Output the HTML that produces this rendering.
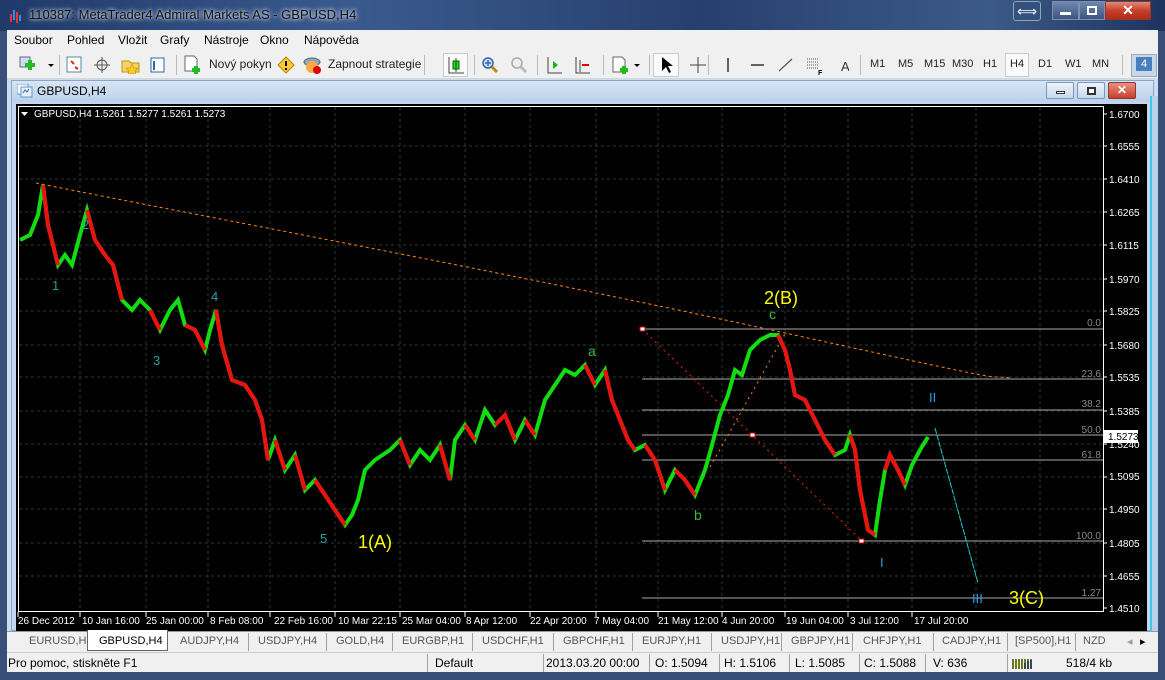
<!DOCTYPE html>
<html><head><meta charset="utf-8"><style>
*{margin:0;padding:0;box-sizing:border-box}
body{width:1165px;height:680px;overflow:hidden;background:#3a4f77;font-family:"Liberation Sans",sans-serif;font-size:12px;position:relative}
.abs{position:absolute}
#title{left:0;top:0;width:1165px;height:31px;background:linear-gradient(90deg,#1f3a68,#3a5a8e 30%,#26406e 60%,#3c5a86 85%,#1e3360);}
#title span{position:absolute;left:29px;top:7px;color:#111;font-size:13px;text-shadow:0 0 6px #cdd8e8,0 0 3px #e8eef6}
#menu{left:7px;top:30px;width:1151px;height:21px;background:#f0f0f0}
#menu span{position:absolute;top:3px;font-size:12px;color:#000}
#tb{left:7px;top:51px;width:1151px;height:28px;background:#f0f0f0;border-bottom:1px solid #d8d8d8}
#tb span{position:absolute;top:7px;font-size:11px;color:#222}
.sep{position:absolute;top:4px;width:1px;height:20px;background:#bbb}
#mdi{left:7px;top:79px;width:1151px;height:573px;background:#c9dcf0}
#child{left:11px;top:80px;width:1143px;height:551px;background:linear-gradient(#d8e6f4,#bcd2ea 20px,#c3d8ee 22px);border:1px solid #8aa6c6}
#chart{left:16px;top:104px;width:1131px;height:527px;background:#000}
#tabs{left:7px;top:631px;width:1151px;height:21px;background:#f0f0f0;border-top:1px solid #999}
#tabs span{position:absolute;top:3px;font-size:11px;color:#555}
#status{left:7px;top:652px;width:1151px;height:20px;background:#f0f0f0;border-top:1px solid #ccc}
#status span{position:absolute;top:3px;font-size:12px;color:#000}
.vs{position:absolute;top:1px;width:1px;height:18px;background:#a0a0a0}
</style></head><body>
<div id="title" class="abs"><svg class="abs" style="left:9px;top:8px" width="14" height="16"><rect x="1" y="6" width="2" height="8" fill="#e33"/><rect x="4" y="2" width="2" height="10" fill="#3a8ee0"/><rect x="7" y="4" width="2" height="11" fill="#e33"/><rect x="10" y="7" width="2" height="6" fill="#3a8ee0"/></svg><span>110387: MetaTrader4 Admiral Markets AS - GBPUSD,H4</span>
<div class="abs" style="left:1013px;top:1px;width:28px;height:20px;border:1px solid #8aa;border-radius:3px;background:#33507e;color:#fff;text-align:center;font-size:14px;line-height:18px">⟺</div>
<div class="abs" style="left:1052px;top:1px;width:27px;height:19px;border:1px solid #7b8fae;background:linear-gradient(#6f87ad,#3c5680);"><div style="margin:10px auto 0;width:11px;height:3px;background:#fff"></div></div>
<div class="abs" style="left:1079px;top:1px;width:26px;height:19px;border:1px solid #7b8fae;background:linear-gradient(#6f87ad,#3c5680);"><div style="margin:4px auto 0;width:10px;height:9px;border:2px solid #fff"></div></div>
<div class="abs" style="left:1105px;top:1px;width:46px;height:19px;border:1px solid #8a3a30;background:linear-gradient(#e08a7a,#c8402a 50%,#b02a18);color:#fff;font-weight:bold;text-align:center;font-size:14px;line-height:17px">✕</div>
</div>
<div id="menu" class="abs"><span style="left:7px">Soubor</span><span style="left:60px">Pohled</span><span style="left:111px">Vložit</span><span style="left:153px">Grafy</span><span style="left:197px">Nástroje</span><span style="left:253px">Okno</span><span style="left:297px">Nápověda</span></div>
<div id="tb" class="abs">
<svg class="abs" style="left:12px;top:5px" width="36" height="18"><rect x="1" y="1" width="10" height="10" fill="#cde" stroke="#668"/><path d="M6 9h10M11 4v10" stroke="#2b2" stroke-width="4"/><path d="M29 8l3 3 3-3z" fill="#000"/></svg>
<div class="sep" style="left:52px"></div>
<svg class="abs" style="left:59px;top:5px" width="100" height="18"><rect x="1" y="1" width="14" height="15" fill="#fff" stroke="#58a"/><path d="M5 5l3 3M9 11l3 2" stroke="#d30" stroke-width="2"/><circle cx="36" cy="9" r="5" fill="none" stroke="#555"/><path d="M36 1v16M28 9h16" stroke="#555"/><path d="M56 5h7l2 2h8v9H56z" fill="#f5d36a" stroke="#b90"/><path d="M66 8l2 4 4 0-3 3 1 4-4-2-4 2 1-4-3-3 4 0z" fill="#fc2" stroke="#c80" stroke-width=".6"/><rect x="85" y="2" width="13" height="14" fill="#fff" stroke="#36a"/><path d="M88 5v9" stroke="#36a" stroke-width="2"/></svg>
<div class="sep" style="left:169px"></div>
<svg class="abs" style="left:176px;top:4px" width="18" height="20"><path d="M2 1h9l3 3v12H2z" fill="#fff" stroke="#666"/><path d="M9 15h8M13 11v8" stroke="#2b2" stroke-width="4"/></svg>
<span style="left:202px;font-size:12px;top:6px">Nový pokyn</span>
<svg class="abs" style="left:270px;top:5px" width="18" height="18"><path d="M9 1l8 8-8 8-8-8z" fill="#fc3" stroke="#a80"/><path d="M9 5v5M9 12v2" stroke="#000" stroke-width="2"/></svg>
<svg class="abs" style="left:296px;top:4px" width="20" height="20"><ellipse cx="9" cy="7" rx="8" ry="4" fill="#8ab" stroke="#567"/><circle cx="9" cy="12" r="6" fill="#fa4"/><circle cx="14" cy="15" r="4" fill="#d00"/></svg>
<span style="left:321px;font-size:12px;top:6px">Zapnout strategie</span>
<div class="sep" style="left:417px"></div>
<div class="abs" style="left:436px;top:2px;width:25px;height:24px;border:1px solid #ccc;background:#fafafa"></div>
<svg class="abs" style="left:440px;top:5px" width="18" height="18"><path d="M2 1v16h15" stroke="#444" fill="none"/><rect x="6" y="5" width="6" height="8" fill="#3c3" stroke="#060"/><path d="M9 2v14" stroke="#060"/></svg>
<div class="sep" style="left:467px"></div>
<svg class="abs" style="left:474px;top:5px" width="60" height="18"><circle cx="7" cy="7" r="5" fill="#cdf" stroke="#36a" stroke-width="1.5"/><path d="M11 11l5 5" stroke="#b80" stroke-width="3"/><path d="M4 7h6M7 4v6" stroke="#36a" stroke-width="1.5"/><circle cx="36" cy="7" r="5" fill="#eee" stroke="#aaa" stroke-width="1.5"/><path d="M40 11l5 5" stroke="#bbb" stroke-width="3"/></svg>
<div class="sep" style="left:530px"></div>
<svg class="abs" style="left:538px;top:5px" width="50" height="18"><path d="M3 1v16h14" stroke="#444" fill="none"/><path d="M8 5l5 4-5 4z" fill="#2a2"/><path d="M31 1v16h14M35 4v12" stroke="#444" fill="none"/><path d="M44 9h-7" stroke="#d00" stroke-width="2"/></svg>
<div class="sep" style="left:596px"></div>
<svg class="abs" style="left:604px;top:4px" width="30" height="20"><path d="M2 2h9l3 3v12H2z" fill="#fff" stroke="#666"/><path d="M9 15h8M13 11v8" stroke="#2b2" stroke-width="4"/><path d="M23 9l3 3 3-3z" fill="#000"/></svg>
<div class="sep" style="left:642px"></div>
<div class="abs" style="left:646px;top:2px;width:26px;height:24px;border:1px solid #ccc;background:#fafafa"></div>
<svg class="abs" style="left:652px;top:5px" width="60" height="18"><path d="M3 1v14l4-4 3 6 2-1-3-6h5z" fill="#000"/><path d="M39 1v16M31 9h16" stroke="#444"/></svg>
<div class="sep" style="left:701px"></div>
<svg class="abs" style="left:712px;top:4px" width="130" height="20"><path d="M9 3v14" stroke="#333" stroke-width="1.5"/><path d="M32 10h13" stroke="#333" stroke-width="1.5"/><path d="M60 16l13-12" stroke="#555" stroke-width="1.2"/><path d="M88 4h12M88 7h12M88 10h12M88 13h12" stroke="#555" stroke-dasharray="1 1"/><text x="99" y="20" font-size="7" font-family="Liberation Sans" font-weight="bold">F</text><text x="122" y="16" font-size="13" font-family="Liberation Sans" fill="#333">A</text></svg>
<div class="sep" style="left:853px"></div>
<div class="abs" style="left:998px;top:2px;width:24px;height:24px;border:1px solid #ccc;background:#fafafa"></div>
<span style="left:863px">M1</span><span style="left:891px">M5</span><span style="left:917px">M15</span><span style="left:945px">M30</span><span style="left:976px">H1</span><span style="left:1003px">H4</span><span style="left:1031px">D1</span><span style="left:1058px">W1</span><span style="left:1085px">MN</span>
<div class="sep" style="left:1115px"></div>
<div class="abs" style="left:1124px;top:3px;width:26px;height:23px;background:#c8d8ec;border:1px solid #9ab"><div style="margin:2px 4px;width:16px;height:14px;background:#4a7fbf;color:#fff;font-size:11px;text-align:center;line-height:14px">4</div></div>
</div>
<div id="mdi" class="abs"></div>
<div id="child" class="abs">
<svg class="abs" style="left:5px;top:3px" width="16" height="14"><rect x="0" y="0" width="11" height="10" fill="#fff" stroke="#59c"/><rect x="4" y="3" width="11" height="10" fill="#e8f0fa" stroke="#59c"/><path d="M6 9l2-3 2 2 2-3" stroke="#36a" fill="none"/></svg>
<span class="abs" style="left:25px;top:3px;font-size:12px;color:#000">GBPUSD,H4</span>
<div class="abs" style="left:1034px;top:1px;width:28px;height:17px;border:1px solid #7a96ba;border-radius:2px;background:linear-gradient(#eef4fb,#c7d8ec)"><div style="margin:8px auto 0;width:9px;height:3px;border:1px solid #333;background:#fff"></div></div>
<div class="abs" style="left:1065px;top:1px;width:28px;height:17px;border:1px solid #7a96ba;border-radius:2px;background:linear-gradient(#eef4fb,#c7d8ec)"><div style="margin:4px auto 0;width:9px;height:8px;border:2px solid #333;background:#fff"></div></div>
<div class="abs" style="left:1096px;top:1px;width:28px;height:17px;border:1px solid #8a3a30;border-radius:2px;background:linear-gradient(#e89080,#c84030);color:#fff;font-weight:bold;text-align:center;font-size:12px;line-height:15px">✕</div>
</div>
<div class="abs" style="left:1150px;top:96px;width:8px;height:535px;background:#b8d0ea;border-left:2px solid #3cc8f0"></div>
<div id="chart" class="abs">
<svg width="1131" height="527" style="position:absolute;left:0;top:0" font-family="Liberation Sans">
<g stroke="#2a3a30" stroke-dasharray="3 3" stroke-width="1">
<path d="M64 3V508M130 3V508M192 3V508M254 3V508M319 3V508M384 3V508M449 3V508M514 3V508M580 3V508M642 3V508M706 3V508M769 3V508M832 3V508M896 3V508M960 3V508M1024 3V508"/>
<path d="M3 42H1087M3 75H1087M3 108H1087M3 141H1087M3 175H1087M3 207H1087M3 241H1087M3 273H1087M3 307H1087M3 340H1087M3 373H1087M3 405H1087M3 439H1087M3 472H1087"/>
</g>
<rect x="2.5" y="2.5" width="1085" height="505" fill="none" stroke="#fff"/>
<g stroke="#fff"><path d="M1087 10h4M1087 42h4M1087 75h4M1087 108h4M1087 141h4M1087 175h4M1087 207h4M1087 241h4M1087 273h4M1087 307h4M1087 340h4M1087 373h4M1087 405h4M1087 439h4M1087 472h4M1087 504h4"/>
<path d="M2 508v5M64 508v5M130 508v5M192 508v5M254 508v5M319 508v5M384 508v5M449 508v5M514 508v5M580 508v5M642 508v5M706 508v5M769 508v5M832 508v5M896 508v5"/></g>
<g fill="#fff" font-size="10"><text x="1093" y="14">1.6700</text><text x="1093" y="46">1.6555</text><text x="1093" y="79">1.6410</text><text x="1093" y="112">1.6265</text><text x="1093" y="145">1.6115</text><text x="1093" y="179">1.5970</text><text x="1093" y="211">1.5825</text><text x="1093" y="245">1.5680</text><text x="1093" y="277">1.5535</text><text x="1093" y="311">1.5385</text><text x="1093" y="344">1.5240</text><text x="1093" y="376">1.5095</text><text x="1093" y="409">1.4950</text><text x="1093" y="443">1.4805</text><text x="1093" y="476">1.4655</text><text x="1093" y="508">1.4510</text>
<text x="2" y="520">26 Dec 2012</text><text x="66" y="520">10 Jan 16:00</text><text x="130" y="520">25 Jan 00:00</text><text x="194" y="520">8 Feb 08:00</text><text x="258" y="520">22 Feb 16:00</text><text x="322" y="520">10 Mar 22:15</text><text x="386" y="520">25 Mar 04:00</text><text x="450" y="520">8 Apr 12:00</text><text x="514" y="520">22 Apr 20:00</text><text x="578" y="520">7 May 04:00</text><text x="642" y="520">21 May 12:00</text><text x="706" y="520">4 Jun 20:00</text><text x="770" y="520">19 Jun 04:00</text><text x="834" y="520">3 Jul 12:00</text><text x="898" y="520">17 Jul 20:00</text>
<path d="M5 8h7l-3.5 4z"/><text x="18" y="13" font-size="10">GBPUSD,H4  1.5261 1.5277 1.5261 1.5273</text></g>
<rect x="1088" y="326" width="34" height="13" fill="#fff"/><text x="1092" y="336" font-size="10" fill="#000">1.5273</text>
<path d="M20 79C200 115 500 170 760 227S960 270 995 274" stroke="#f80" stroke-dasharray="3 3" fill="none"/>
<g stroke="#888" stroke-width="1.2"><path d="M626 225H1087M626 275H1087M626 306H1087M626 331H1087M626 356H1087M626 437H1087M626 494H1087"/></g>
<g fill="#888" font-size="10" text-anchor="end"><text x="1085" y="222">0.0</text><text x="1085" y="273">23.6</text><text x="1085" y="303">38.2</text><text x="1085" y="329">50.0</text><text x="1085" y="354">61.8</text><text x="1085" y="435">100.0</text><text x="1085" y="492">1.27</text></g>
<path d="M626 225L846 437" stroke="#e22" stroke-dasharray="2 4" fill="none"/>
<path d="M694 363L770 228" stroke="#f80" stroke-dasharray="2 4" fill="none"/>
<g fill="#fff" stroke="#c00"><rect x="624" y="223" width="5" height="4"/><rect x="734" y="329" width="5" height="4"/><rect x="843" y="435" width="5" height="4"/></g>
<path d="M919 324L962 479" stroke="#2cc" stroke-dasharray="6 1" fill="none"/>
<polyline fill="none" stroke="#1d1" stroke-width="4" points="4,136 14,131 22,111 27,81 32,121 42,161 49,151 56,161 64,131 71,106 79,136 89,151 97,161 106,196 116,206 124,196 134,206 144,226 154,206 162,196 169,221 179,226 189,246 194,226 200,206 206,241 216,276 229,281 239,296 246,316 252,356 259,336 269,366 279,351 289,386 299,376 309,391 319,406 329,421 336,411 342,396 349,366 359,356 374,346 384,336 394,361 404,346 414,356 424,341 434,376 439,336 449,321 459,336 469,306 479,321 489,311 499,336 509,316 519,331 529,296 539,281 549,266 559,271 569,261 579,281 589,266 596,296 604,316 612,336 619,346 629,341 639,356 649,386 659,366 669,376 679,391 689,366 696,341 704,311 712,291 719,266 726,271 734,246 744,236 754,231 762,231 769,246 774,266 779,291 789,296 799,316 809,336 819,351 829,346 834,331 839,346 844,386 852,426 859,431 864,396 869,366 874,351 882,366 889,381 896,361 904,346 912,333"/>
<path fill="none" stroke="#e11" stroke-width="4" d="M27 81L32 121 42 161M71 106L79 136 89 151 97 161 106 196M134 206L144 226M169 221L179 226 189 246M200 206L206 241 216 276 229 281 239 296 246 316 252 356M259 336L269 366M279 351L289 386M299 376L309 391 319 406 329 421M384 336L394 361M424 341L434 376M449 321L459 336M479 321L489 311 499 336M509 316L519 331M569 261L579 281M589 266L596 296 604 316 612 336 619 346M629 341L639 356 649 386M659 366L669 376 679 391M762 231L769 246 774 266 779 291 789 296 799 316 809 336 819 351M834 331L839 346 844 386 852 426 859 431M869 366L874 351 882 366 889 381"/>
<g font-size="13" fill="#2aa0a0"><text x="36" y="186">1</text><text x="66" y="125">2</text><text x="137" y="261">3</text><text x="195" y="197">4</text><text x="304" y="439">5</text><text x="864" y="463" fill="#2aa0c0">I</text></g>
<g font-size="14" fill="#3dba3d"><text x="572" y="252">a</text><text x="678" y="416">b</text><text x="753" y="215">c</text></g>
<g font-size="13" fill="#2a9ee8"><text x="913" y="298">II</text><text x="956" y="499">III</text></g>
<g font-size="18" fill="#ff0"><text x="342" y="444">1(A)</text><text x="748" y="200">2(B)</text><text x="993" y="500">3(C)</text></g>
</svg></div>
<div id="tabs" class="abs">
<span style="left:22px">EURUSD,H4</span>
<div class="abs" style="left:80px;top:-2px;width:81px;height:21px;background:#fff;border:1px solid #666;border-top:none"></div>
<span style="left:92px;color:#000">GBPUSD,H4</span>
<span style="left:173px">AUDJPY,H4</span><div class="vs" style="left:241px"></div>
<span style="left:251px">USDJPY,H4</span><div class="vs" style="left:319px"></div>
<span style="left:329px">GOLD,H4</span><div class="vs" style="left:385px"></div>
<span style="left:395px">EURGBP,H1</span><div class="vs" style="left:465px"></div>
<span style="left:475px">USDCHF,H1</span><div class="vs" style="left:546px"></div>
<span style="left:556px">GBPCHF,H1</span><div class="vs" style="left:625px"></div>
<span style="left:635px">EURJPY,H1</span><div class="vs" style="left:704px"></div>
<span style="left:714px">USDJPY,H1</span><div class="vs" style="left:774px"></div>
<span style="left:784px">GBPJPY,H1</span><div class="vs" style="left:845px"></div>
<span style="left:856px">CHFJPY,H1</span><div class="vs" style="left:926px"></div>
<span style="left:935px">CADJPY,H1</span><div class="vs" style="left:1000px"></div>
<span style="left:1008px">[SP500],H1</span><div class="vs" style="left:1068px"></div>
<span style="left:1076px">NZD</span><span style="left:1120px;color:#999">◂</span><span style="left:1133px;color:#000">▸</span>
</div>
<div id="status" class="abs">
<span style="left:1px">Pro pomoc, stiskněte F1</span>
<div class="vs" style="left:420px"></div><span style="left:428px">Default</span>
<div class="vs" style="left:536px"></div><span style="left:539px">2013.03.20 00:00</span>
<div class="vs" style="left:642px"></div><span style="left:648px">O: 1.5094</span>
<div class="vs" style="left:712px"></div><span style="left:717px">H: 1.5106</span>
<div class="vs" style="left:782px"></div><span style="left:788px">L: 1.5085</span>
<div class="vs" style="left:852px"></div><span style="left:857px">C: 1.5088</span>
<div class="vs" style="left:918px"></div><span style="left:926px">V: 636</span>
<div class="vs" style="left:1000px"></div>
<svg class="abs" style="left:1005px;top:4px" width="22" height="12"><path d="M1 12V2M4 12V2M7 12V2M10 12V2M13 12V2M16 12V2M19 12V2" stroke="#6a7a20" stroke-width="2"/><path d="M13 12V6M16 12V4M19 12V3" stroke="#345" stroke-width="2"/></svg>
<span style="left:1059px">518/4 kb</span>
</div>
</body></html>
